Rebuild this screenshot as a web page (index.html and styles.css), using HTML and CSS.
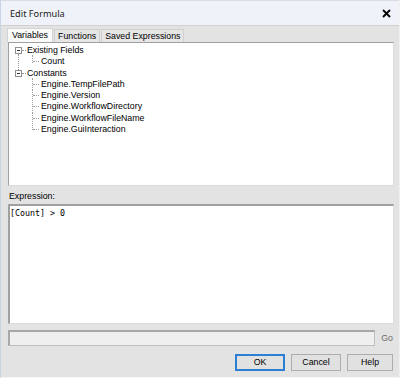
FILE: index.html
```html
<!DOCTYPE html>
<html>
<head>
<meta charset="utf-8">
<link rel="stylesheet" href="styles.css">
</head>
<body>
<div class="window">
  <div class="titlebar">
    <span class="title">Edit Formula</span>
    <svg class="close" width="9" height="9" viewBox="0 0 9 9"><path d="M1 1L8 8M8 1L1 8" stroke="#000" stroke-width="1.8"/></svg>
  </div>
  <div class="body">
    <div class="tabs">
      <div class="tab active">Variables</div>
      <div class="tab">Functions</div>
      <div class="tab">Saved Expressions</div>
    </div>
    <div class="tree sunken">
      <div class="node root"><span class="box"></span><span class="hl"></span>Existing Fields</div>
      <div class="node child last"><span class="rl"></span><span class="vl"></span>Count</div>
      <div class="node root"><span class="box"></span><span class="hl"></span>Constants</div>
      <div class="node child"><span class="vl"></span>Engine.TempFilePath</div>
      <div class="node child"><span class="vl"></span>Engine.Version</div>
      <div class="node child"><span class="vl"></span>Engine.WorkflowDirectory</div>
      <div class="node child"><span class="vl"></span>Engine.WorkflowFileName</div>
      <div class="node child last"><span class="vl"></span>Engine.GuiInteraction</div>
    </div>
    <div class="label">Expression:</div>
    <div class="expr sunken">[Count] &gt; 0</div>
    <div class="gorow">
      <div class="input sunken"></div>
      <span class="go">Go</span>
    </div>
    <div class="buttons">
      <div class="btn default">OK</div>
      <div class="btn">Cancel</div>
      <div class="btn">Help</div>
    </div>
  </div>
</div>
</body>
</html>
```

FILE: styles.css
```css
* { box-sizing: border-box; }
html, body { margin: 0; padding: 0; }
body {
  width: 400px;
  height: 379px;
  overflow: hidden;
  font-family: "Liberation Sans", Arial, sans-serif;
  font-size: 8.8px;
  color: #000;
  background: #fff;
}
.window {
  width: 400px;
  height: 378px;
  display: flex;
  flex-direction: column;
  background: #e3e3e3;
  border-left: 1px solid #c9d3e3;
  border-right: 1px solid #f0f0f0;
  border-bottom: 1px solid #f4f4f4;
}
.titlebar {
  height: 26px;
  flex: none;
  background: #eff3f9;
  border-top: 1px solid #d8dde5;
  border-bottom: 1px solid #d0d0d0;
  display: flex;
  align-items: center;
  justify-content: space-between;
  padding: 0 8px 0 9px;
}
.title {
  font-family: "Noto Sans", sans-serif;
  font-size: 9.2px;
  color: #1a1a1a;
}
.body {
  flex: 1;
  display: flex;
  flex-direction: column;
  padding: 2px 3px 0 6px;
}
.tabs {
  display: flex;
  height: 14px;
  align-items: flex-end;
}
.tab {
  height: 13px;
  line-height: 12px;
  padding: 0 3px;
  border: 1px solid #d0d0d0;
  border-bottom: none;
  background: #e6e6e6;
  margin-right: 1px;
}
.tab.active {
  height: 14px;
  background: #fafafa;
  border-color: #d4d4d4;
  padding: 0 4px;
}
.sunken {
  background: #fff;
  border-top: 2px solid #a0a0a0;
  border-left: 2px solid #a0a0a0;
  border-right: 1px solid #dcdcdc;
  border-bottom: 1px solid #dcdcdc;
}
.tree {
  height: 144px;
  margin-left: 1px;
  margin-right: 2px;
  padding: 2px 0 0 4px;
  border-top-width: 1px;
  border-left-width: 1px;
}
.node {
  position: relative;
  height: 11.25px;
  line-height: 11px;
  white-space: nowrap;
}
.node.root { padding-left: 14px; }
.node.child { padding-left: 28px; }
.box {
  position: absolute;
  left: 2px;
  top: 2px;
  width: 7px;
  height: 7px;
  border: 1px solid #8f8f8f;
  background: #fff;
}
.box::after {
  content: "";
  position: absolute;
  left: 1px;
  top: 2px;
  width: 3px;
  border-top: 1px solid #333;
}
.hl {
  position: absolute;
  left: 9px;
  top: 5px;
  width: 4px;
  border-top: 1px dotted #999;
}
.rl {
  position: absolute;
  left: 5px;
  top: -2px;
  bottom: -2px;
  border-left: 1px dotted #999;
}
.vl {
  position: absolute;
  left: 19px;
  top: -1px;
  bottom: 0;
  border-left: 1px dotted #a0a0a0;
}
.vl::after {
  content: "";
  position: absolute;
  left: 0;
  top: 6px;
  width: 6px;
  border-top: 1px dotted #a0a0a0;
}
.node.child.last .vl { bottom: 5px; }
.label {
  height: 18px;
  line-height: 16px;
  padding-top: 2px;
  padding-left: 2px;
}
.expr {
  height: 120px;
  margin-left: 1px;
  margin-right: 2px;
  padding: 2px 0 0 0;
  font-family: "DejaVu Sans Mono", "Liberation Mono", monospace;
  font-size: 8.3px;
  line-height: 11px;
}
.gorow {
  display: flex;
  align-items: center;
  margin-top: 6px;
  height: 16px;
}
.input {
  flex: 1;
  height: 16px;
  margin-left: 1px;
  background: #efefef;
  border-top: 2px solid #a8a8a8;
  border-left: 2px solid #a8a8a8;
  border-right: 1px solid #c0c0c0;
  border-bottom: 1px solid #c0c0c0;
}
.go {
  width: 21px;
  text-align: center;
  color: #6d6d6d;
  padding-left: 3px;
}
.buttons {
  display: flex;
  justify-content: flex-end;
  gap: 6px;
  margin-top: 8px;
  padding-right: 3px;
}
.btn {
  width: 50px;
  height: 17px;
  line-height: 15px;
  text-align: center;
  background: #e1e1e1;
  border: 1px solid #adadad;
}
.btn:last-child { width: 46px; }
.btn.default {
  border: 2px solid #2d7fd4;
  line-height: 13px;
}
```
